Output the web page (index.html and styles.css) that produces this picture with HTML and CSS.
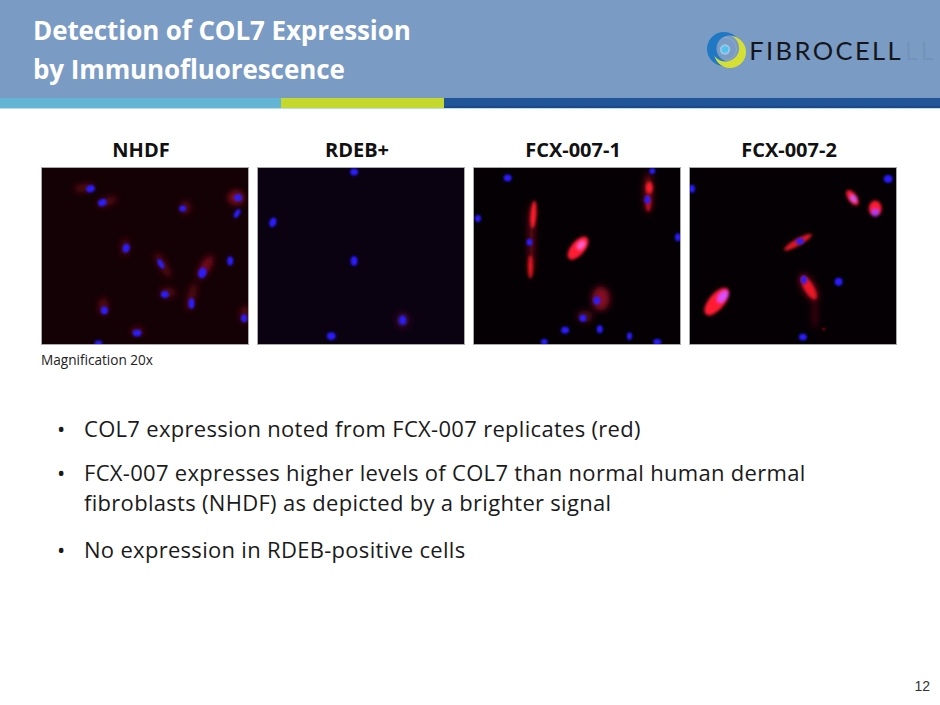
FILE: index.html
```html
<!DOCTYPE html>
<html lang="en">
<head>
<meta charset="utf-8">
<title>Detection of COL7 Expression by Immunofluorescence</title>
<link rel="stylesheet" href="styles.css">
</head>
<body>
<svg class="defs" width="0" height="0" aria-hidden="true">
  <defs>
    <filter id="bn" x="-50%" y="-50%" width="200%" height="200%"><feGaussianBlur stdDeviation="0.9"/></filter>
    <filter id="bs" x="-50%" y="-50%" width="200%" height="200%"><feGaussianBlur stdDeviation="1.7"/></filter>
    <filter id="br" x="-80%" y="-80%" width="260%" height="260%"><feGaussianBlur stdDeviation="3.2"/></filter>
    <mask id="blueMask"><rect width="40" height="38" fill="#fff"/><circle cx="22.5" cy="17.5" r="13" fill="#000"/></mask>
    <mask id="yelMask"><rect width="40" height="38" fill="#fff"/><circle cx="18.5" cy="17" r="13.6" fill="#000"/></mask>
  </defs>
</svg>
<div class="slide">
  <header class="header">
    <div class="header-main">
      <h1 class="title">Detection of COL7 Expression<br>by Immunofluorescence</h1>
      <div class="logo">
        <svg class="logo-mark" width="40" height="38" viewBox="0 0 40 38">
          <circle cx="18" cy="18" r="11.5" fill="none" stroke="#8eaad0" stroke-width="1"/>
          <circle cx="17" cy="18" r="17" fill="#1f78c4" mask="url(#blueMask)"/>
          <circle cx="23" cy="21" r="16" fill="#d6e033" mask="url(#yelMask)"/>
          <circle cx="18" cy="18.5" r="5.2" fill="#9cc4e6"/>
          <circle cx="18" cy="18.5" r="3.3" fill="#4fc3ee"/>
        </svg>
        <span class="logo-text">FIBROCELL</span>
        <span class="logo-ghost" aria-hidden="true">LL</span>
      </div>
    </div>
    <div class="stripe">
      <span class="stripe-cyan"></span>
      <span class="stripe-lime"></span>
      <span class="stripe-blue"></span>
    </div>
  </header>

  <section class="panels">
    <figure class="panel">
      <figcaption class="panel-label">NHDF</figcaption>
      <svg class="micro" viewBox="0 0 208 178" preserveAspectRatio="none">
        <rect width="208" height="178" fill="#130106"/>
        <g filter="url(#br)" fill="#6e0a14" opacity="0.75">
          <ellipse cx="42" cy="20" rx="10" ry="4" transform="rotate(-10 42 20)"/>
          <ellipse cx="66" cy="34" rx="11" ry="4" transform="rotate(-20 66 34)"/>
          <ellipse cx="145" cy="40" rx="5" ry="7"/>
          <ellipse cx="196" cy="30" rx="8" ry="7" fill="#b01424"/>
          <ellipse cx="84" cy="80" rx="4" ry="9"/>
          <ellipse cx="122" cy="98" rx="4" ry="15" transform="rotate(-30 122 98)"/>
          <ellipse cx="165" cy="100" rx="5" ry="13" transform="rotate(30 165 100)" fill="#a01020"/>
          <ellipse cx="127" cy="126" rx="8" ry="5"/>
          <ellipse cx="151" cy="130" rx="4" ry="15" transform="rotate(15 151 130)"/>
          <ellipse cx="62" cy="140" rx="5" ry="9"/>
          <ellipse cx="205" cy="148" rx="5" ry="9"/>
          <ellipse cx="96" cy="165" rx="7" ry="4"/>
        </g>
        <g filter="url(#bn)" fill="#2c1cff">
          <ellipse cx="49" cy="21" rx="4.5" ry="3.5" transform="rotate(-20 49 21)"/>
          <ellipse cx="61" cy="35" rx="4.5" ry="3.5" transform="rotate(-20 61 35)"/>
          <ellipse cx="142" cy="41" rx="3.5" ry="3"/>
          <ellipse cx="198" cy="30" rx="4" ry="3.5"/>
          <ellipse cx="197" cy="46" rx="2.5" ry="5" transform="rotate(30 197 46)"/>
          <ellipse cx="85" cy="81" rx="3.5" ry="4.5" transform="rotate(20 85 81)"/>
          <ellipse cx="120" cy="97" rx="2.5" ry="5.5" transform="rotate(-30 120 97)"/>
          <ellipse cx="162" cy="106" rx="4" ry="5.5" transform="rotate(20 162 106)"/>
          <ellipse cx="190" cy="94" rx="3" ry="4.5"/>
          <ellipse cx="124" cy="128" rx="4" ry="3.5"/>
          <ellipse cx="151" cy="137" rx="3" ry="5.5"/>
          <ellipse cx="63" cy="144" rx="3.5" ry="4"/>
          <ellipse cx="204" cy="152" rx="3" ry="4"/>
          <ellipse cx="96" cy="167" rx="4.5" ry="3.5"/>
          <ellipse cx="57" cy="177" rx="4" ry="2.5"/>
        </g>
      </svg>
    </figure>

    <figure class="panel">
      <figcaption class="panel-label">RDEB+</figcaption>
      <svg class="micro" viewBox="0 0 208 178" preserveAspectRatio="none">
        <rect width="208" height="178" fill="#0a0210"/>
        <ellipse cx="146" cy="154" rx="7" ry="8" fill="#3a0830" filter="url(#br)"/>
        <g filter="url(#bn)" fill="#2c1cff">
          <ellipse cx="97" cy="4" rx="4" ry="3.5"/>
          <ellipse cx="15" cy="55" rx="3.5" ry="5" transform="rotate(20 15 55)"/>
          <ellipse cx="97" cy="94" rx="3.5" ry="5"/>
          <ellipse cx="146" cy="154" rx="3.5" ry="4.5"/>
          <ellipse cx="74" cy="170" rx="4.5" ry="4"/>
        </g>
      </svg>
    </figure>

    <figure class="panel">
      <figcaption class="panel-label">FCX-007-1</figcaption>
      <svg class="micro" viewBox="0 0 208 178" preserveAspectRatio="none">
        <rect width="208" height="178" fill="#040004"/>
        <g filter="url(#br)">
          <ellipse cx="128" cy="132" rx="9" ry="12" fill="#8a1020"/>
          <ellipse cx="112" cy="150" rx="8" ry="6" fill="#500a18"/>
          <ellipse cx="58" cy="72" rx="3" ry="36" fill="#700a16"/>
          <ellipse cx="176" cy="25" rx="4" ry="20" fill="#800c18"/>
        </g>
        <g filter="url(#bs)">
          <ellipse cx="60" cy="47" rx="3" ry="14" fill="#ff1a2a" transform="rotate(4 60 47)"/>
          <ellipse cx="57" cy="100" rx="2.5" ry="12" fill="#e8141f"/>
          <ellipse cx="105" cy="81" rx="14" ry="7" fill="#ff1a30" transform="rotate(-50 105 81)"/>
          <ellipse cx="177" cy="20" rx="3.5" ry="6" fill="#ff1a2a"/>
          <ellipse cx="176" cy="36" rx="2.5" ry="8" fill="#c01020"/>
        </g>
        <ellipse cx="108" cy="78" rx="5.5" ry="3.5" fill="#ff60d0" filter="url(#bs)" transform="rotate(-50 108 78)"/>
        <g filter="url(#bn)" fill="#2c1cff">
          <ellipse cx="34" cy="10" rx="4" ry="3.5"/>
          <ellipse cx="4" cy="51" rx="3" ry="3.5"/>
          <ellipse cx="56" cy="75" rx="3" ry="3.5"/>
          <ellipse cx="180" cy="3" rx="3" ry="3"/>
          <ellipse cx="175" cy="32" rx="3" ry="4"/>
          <ellipse cx="206" cy="70" rx="3" ry="4"/>
          <ellipse cx="124" cy="134" rx="3.5" ry="4"/>
          <ellipse cx="110" cy="152" rx="3.5" ry="3.5"/>
          <ellipse cx="92" cy="164" rx="4" ry="3.5"/>
          <ellipse cx="127" cy="163" rx="3" ry="4"/>
          <ellipse cx="157" cy="170" rx="2.5" ry="4"/>
          <ellipse cx="185" cy="176" rx="4" ry="3"/>
          <ellipse cx="71" cy="176" rx="3.5" ry="3"/>
        </g>
      </svg>
    </figure>

    <figure class="panel">
      <figcaption class="panel-label">FCX-007-2</figcaption>
      <svg class="micro" viewBox="0 0 208 178" preserveAspectRatio="none">
        <rect width="208" height="178" fill="#040004"/>
        <g filter="url(#br)">
          <ellipse cx="126" cy="148" rx="2" ry="14" fill="#600a16"/>
          <ellipse cx="120" cy="121" rx="6" ry="15" fill="#900c1a" transform="rotate(-30 120 121)"/>
        </g>
        <g filter="url(#bs)">
          <ellipse cx="164" cy="30" rx="4.5" ry="9" fill="#ff1a30" transform="rotate(-35 164 30)"/>
          <ellipse cx="187" cy="41" rx="6.5" ry="8" fill="#ff1a30"/>
          <ellipse cx="109" cy="75" rx="16" ry="3.5" fill="#e41828" transform="rotate(-30 109 75)"/>
          <ellipse cx="120" cy="121" rx="4.5" ry="13" fill="#ee1828" transform="rotate(-30 120 121)"/>
          <ellipse cx="27" cy="135" rx="8" ry="17" fill="#ff1a30" transform="rotate(40 27 135)"/>
          <ellipse cx="33" cy="130" rx="4" ry="7" fill="#d850ff" transform="rotate(40 33 130)"/>
          <ellipse cx="165" cy="31" rx="2.5" ry="4" fill="#c060ff" transform="rotate(-35 165 31)"/>
          <ellipse cx="187" cy="45" rx="3.5" ry="3.5" fill="#a040ff"/>
        </g>
        <circle cx="135" cy="163" r="1.3" fill="#b01020" filter="url(#bn)"/>
        <g filter="url(#bn)" fill="#2c1cff">
          <ellipse cx="200" cy="11" rx="4.5" ry="4"/>
          <ellipse cx="2" cy="21" rx="3" ry="4"/>
          <ellipse cx="111" cy="74" rx="4" ry="3"/>
          <ellipse cx="115" cy="113" rx="3" ry="4"/>
          <ellipse cx="150" cy="115" rx="4" ry="4"/>
          <ellipse cx="114" cy="171" rx="4" ry="3.5"/>
        </g>
      </svg>
    </figure>
  </section>

  <p class="mag">Magnification 20x</p>

  <ul class="bullets">
    <li class="bullet bullet-first">COL7 expression noted from FCX-007 replicates (red)</li>
    <li class="bullet bullet-second">FCX-007 expresses higher levels of COL7 than normal human dermal<br>fibroblasts (NHDF) as depicted by a brighter signal</li>
    <li class="bullet">No expression in RDEB-positive cells</li>
  </ul>

  <footer class="footer">12</footer>
</div>
</body>
</html>
```

FILE: styles.css
```css
html, body {
  margin: 0;
  padding: 0;
  background: #ffffff;
}

.defs {
  position: absolute;
  width: 0;
  height: 0;
  overflow: hidden;
}

.slide {
  width: 940px;
  height: 705px;
  display: flex;
  flex-direction: column;
  overflow: hidden;
  font-family: "Open Sans", "Liberation Sans", sans-serif;
  color: #1a1a1a;
}

/* Header */
.header {
  background: #7a9bc3;
}

.header-main {
  height: 98px;
  display: flex;
  justify-content: space-between;
  align-items: flex-start;
}

.title {
  margin: 0;
  padding: 11px 0 0 33px;
  font-family: "Open Sans", "Liberation Sans", sans-serif;
  font-weight: 700;
  font-size: 26px;
  line-height: 39px;
  color: #ffffff;
  letter-spacing: -0.1px;
}

.logo {
  display: flex;
  align-items: center;
  gap: 2px;
  margin: 31px 4px 0 0;
  height: 38px;
}

.logo-mark {
  display: block;
  flex: none;
}

.logo-text {
  font-family: "Lato", "Liberation Sans", sans-serif;
  font-weight: 400;
  font-size: 25.5px;
  letter-spacing: 2.4px;
  color: #15161c;
  line-height: 1;
  margin-top: 2px;
}

.logo-ghost {
  font-family: "Lato", "Liberation Sans", sans-serif;
  font-size: 25.5px;
  letter-spacing: 2.4px;
  line-height: 1;
  margin-top: 2px;
  color: rgba(55, 70, 95, 0.11);
}

.stripe {
  display: flex;
  height: 10px;
  border-bottom: 1px solid #b9dcec;
}

.stripe-cyan {
  width: 281px;
  background: #63b5d6;
}

.stripe-lime {
  width: 163px;
  background: #c5d82e;
}

.stripe-blue {
  flex: 1;
  background: #215597;
  box-shadow: inset 0 -2px 0 #1a4a8a;
}

/* Panels */
.panels {
  display: grid;
  grid-template-columns: repeat(4, 208px);
  column-gap: 8px;
  padding-left: 41px;
  margin-top: 29px;
}

.panel {
  margin: 0;
  display: flex;
  flex-direction: column;
}

.panel-label {
  font-weight: 700;
  font-size: 20px;
  line-height: 24px;
  text-align: center;
  padding-right: 8px;
  color: #111111;
  margin-bottom: 5px;
}

.micro {
  display: block;
  width: 208px;
  height: 178px;
  box-sizing: border-box;
  border: 1px solid #a9a9a9;
}

.mag {
  margin: 6px 0 0 41px;
  font-size: 13.6px;
  line-height: 17px;
  color: #222222;
}

/* Bullets */
.bullets {
  list-style: none;
  margin: 45px 0 0 0;
  padding: 0 0 0 84px;
}

.bullet {
  position: relative;
  font-size: 22px;
  letter-spacing: 0.3px;
  line-height: 30px;
  color: #1a1a1a;
}

.bullet::before {
  content: "\2022";
  position: absolute;
  left: -27px;
  top: 0;
  letter-spacing: 0;
}

.bullet-first {
  margin-bottom: 14px;
}

.bullet-second {
  margin-bottom: 17px;
}

.footer {
  margin-top: auto;
  padding: 0 10px 10px 0;
  text-align: right;
  font-family: "Liberation Sans", Arial, sans-serif;
  font-size: 14px;
  line-height: 18px;
  color: #333333;
}
```
